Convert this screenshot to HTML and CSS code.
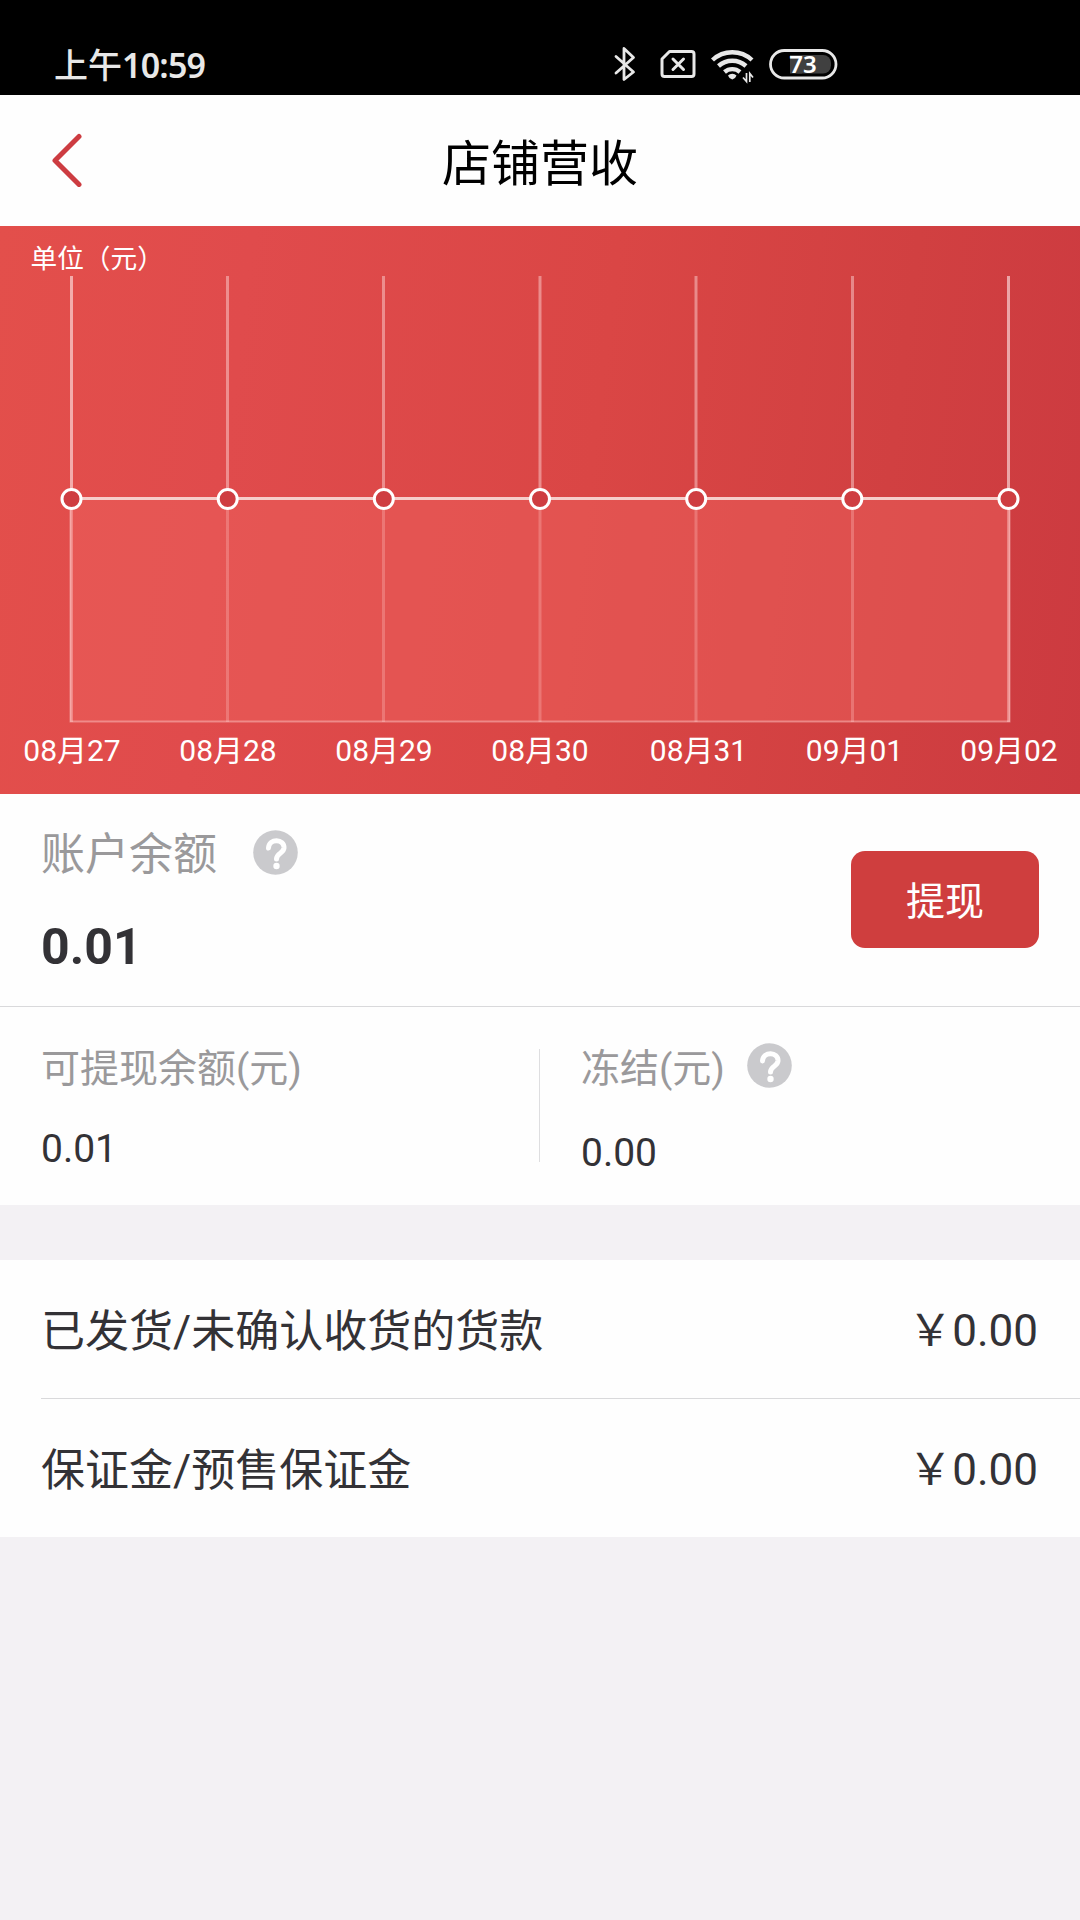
FILE: index.html
```html
<!DOCTYPE html>
<html lang="zh-CN">
<head>
<meta charset="utf-8">
<title>店铺营收</title>
<link rel="stylesheet" href="styles.css">
</head>
<body>
<div class="status-bar">
  <span class="status-time">上午<span class="status-digits">10:59</span></span>
  <svg class="status-icons" viewBox="610 40 232 48" width="232" height="48" fill="none" stroke="#e8e8e8">
    <path d="M616 56.5 633.5 72 624 79.500V48.500L633.5 57.500 616 73" stroke-width="2.8" stroke-linejoin="round" stroke-linecap="round"/>
    <path d="M669.500 51.500H691.500a2.500 2.500 0 0 1 2.500 2.500V74a2.500 2.500 0 0 1-2.500 2.500H664.500a2.500 2.500 0 0 1-2.500-2.500V59Z" stroke-width="3" stroke-linejoin="round"/>
    <path d="m673 59 10.500 10.500m0-10.500L673 69.500" stroke-width="3" stroke-linecap="round"/>
    <g stroke-width="4.400">
      <path d="M712.500 60a29 29 0 0 1 39.500 0"/>
      <path d="M718.500 66a20.500 20.500 0 0 1 27.500 0"/>
      <path d="M724.500 72a12 12 0 0 1 15.500 0"/>
    </g>
    <path d="M728 75.500a5.500 4.500 0 0 1 8.500 0l-1.500 2.500-2.700 1.500-2.800-1.500Z" fill="#e8e8e8" stroke="none"/>
    <path d="M746.500 73v8.500l-3.500-4M749.800 82v-8.500l3.200 4" stroke-width="1.700"/>
    <rect x="790" y="55" width="41" height="18.500" rx="8" fill="#404040" stroke="none"/>
    <rect x="790" y="55" width="12" height="18.500" fill="#404040" stroke="none"/>
    <rect x="770.500" y="50.500" width="65.500" height="27.500" rx="13.750" stroke-width="2.800"/>
    <text class="battery-text" x="803" y="72.500" text-anchor="middle">73</text>
  </svg>
</div>

<header class="header">
  <svg class="back" viewBox="0 0 32 54" width="32" height="54"><path d="M28 3.500 4 27.500 28 51.500" fill="none" stroke="#cd3c41" stroke-width="5" stroke-linecap="round" stroke-linejoin="round"/></svg>
  <h1 class="title">店铺营收</h1>
</header>

<section class="chart">
  <svg viewBox="0 0 1080 568" width="1080" height="568">
    <text class="unit" x="30.500" y="42">单位（元）</text>
    <g class="grid-lines">
      <path class="edge" d="M71.500 50V496"/>
      <path d="M227.500 50V496M383.500 50V496M540 50V496M696 50V496M852.500 50V496"/>
      <path class="edge" d="M1008.500 50V496"/>
    </g>
    <rect class="area" x="70" y="273" width="940" height="223"/>
    <path class="area-border" d="M70.500 273V495.500H1009.500V273"/>
    <path class="series" d="M71.500 272.500H1008.500"/>
    <g class="points">
      <circle cx="71.500" cy="273" r="9.500"/><circle cx="227.700" cy="273" r="9.500"/><circle cx="383.800" cy="273" r="9.500"/><circle cx="540" cy="273" r="9.500"/><circle cx="696.200" cy="273" r="9.500"/><circle cx="852.300" cy="273" r="9.500"/><circle cx="1008.500" cy="273" r="9.500"/>
    </g>
    <g class="dates">
      <text x="72" y="535">08月27</text><text x="228" y="535">08月28</text><text x="384" y="535">08月29</text><text x="540" y="535">08月30</text><text x="698.500" y="535">08月31</text><text x="854.500" y="535">09月01</text><text x="1009" y="535">09月02</text>
    </g>
  </svg>
</section>

<section class="balance">
  <div class="balance-info">
    <div class="label-row">
      <span class="label large">账户余额</span>
      <svg class="help" viewBox="0 0 45 45"><circle cx="22.500" cy="22.500" r="22.300"/><path d="M15.500 18C16 8 31.500 8.500 31 18 30.500 23.500 23.500 23 23.500 29"/><circle class="dot" cx="23.500" cy="36" r="3.200"/></svg>
    </div>
    <div class="total">0.01</div>
  </div>
  <button class="withdraw">提现</button>
</section>

<section class="details">
  <div class="detail">
    <span class="label">可提现余额(元)</span>
    <div class="amount">0.01</div>
  </div>
  <div class="detail frozen">
    <div class="label-row">
      <span class="label">冻结(元)</span>
      <svg class="help" viewBox="0 0 45 45"><circle cx="22.500" cy="22.500" r="22.300"/><path d="M15.500 18C16 8 31.500 8.500 31 18 30.500 23.500 23.500 23 23.500 29"/><circle class="dot" cx="23.500" cy="36" r="3.200"/></svg>
    </div>
    <div class="amount">0.00</div>
  </div>
</section>

<section class="list">
  <div class="row"><span class="name">已发货/未确认收货的货款</span><span class="value">￥0.00</span></div>
  <div class="row"><span class="name">保证金/预售保证金</span><span class="value">￥0.00</span></div>
</section>
</body>
</html>
```

FILE: styles.css
```css
* { box-sizing: border-box; }
body {
  margin: 0;
  width: 1080px;
  min-height: 1920px;
  background: #f3f1f4;
  color: #333236;
  font-family: Roboto, "Noto Sans CJK SC", sans-serif;
}
svg { display: block; }

.status-bar {
  height: 95px;
  padding: 0 238px 0 54px;
  display: flex;
  justify-content: space-between;
  background: #000;
  color: #e8e8e8;
}
.status-time {
  padding-top: 40px;
  font: 500 34px/48px "Noto Sans CJK SC", sans-serif;
}
.status-digits {
  font: 600 34px/48px "Noto Sans", sans-serif;
  letter-spacing: -0.8px;
}
.status-icons { margin-top: 40px; }
.battery-text {
  font: 600 24px "Noto Sans", sans-serif;
  fill: #fff;
  stroke: none;
}

.header {
  height: 131px;
  padding: 0 51px 2px;
  display: grid;
  grid-template-columns: 32px 1fr 32px;
  align-items: center;
  background: #fefefe;
}
.title {
  margin: 0;
  padding-top: 10px;
  font-size: 49px;
  font-weight: 400;
  line-height: 60px;
  text-align: center;
  color: #000;
}

.chart {
  height: 568px;
  background: linear-gradient(97deg, #e34f4b 0%, #e04b4c 22%, #da4645 54%, #d14041 80%, #cc3a40 100%);
}
.chart text { fill: #fff; }
.unit { font-size: 26.700px; }
.dates { font-size: 30px; text-anchor: middle; }
.grid-lines path { stroke: rgba(255, 225, 225, .45); stroke-width: 3; }
.grid-lines .edge { stroke: rgba(255, 235, 235, .6); }
.area { fill: rgba(235, 96, 92, .5); }
.area-border { fill: none; stroke: rgba(255, 220, 220, .4); stroke-width: 2px; }
.series { stroke: #f6cdca; stroke-width: 3; }
.points circle { fill: #cf3d41; stroke: #fff; stroke-width: 3; }

.balance {
  height: 213px;
  padding: 27px 41px 0;
  display: flex;
  justify-content: space-between;
  background: #fefefe;
  border-bottom: 1px solid #d9d9db;
}
.label-row { display: flex; align-items: flex-start; }
.label {
  display: block;
  font-size: 39px;
  line-height: 60px;
  color: #9a999b;
}
.label.large {
  width: 212px;
  padding-top: 2px;
  font-size: 44px;
  line-height: 64px;
}
.help { width: 45px; height: 45px; margin-top: 9px; fill: #cacacd; }
.help path { fill: none; stroke: #fff; stroke-width: 5; stroke-linecap: round; }
.help .dot { fill: #fff; }
.total {
  margin-top: 30px;
  font-size: 50px;
  font-weight: 700;
  line-height: 60px;
}
.withdraw {
  width: 188px;
  height: 97px;
  margin-top: 30px;
  padding: 5px 0 0;
  border: 0;
  border-radius: 14px;
  background: #cf3e3e;
  color: #fff;
  font: 39px/48px Roboto, "Noto Sans CJK SC", sans-serif;
}

.details {
  height: 198px;
  display: grid;
  grid-template-columns: 1fr 1fr;
  background: linear-gradient(#dedee0, #dedee0) 539px 42px / 1px 113px no-repeat #fefefe;
}
.detail { padding: 32px 41px 0; }
.amount { margin-top: 20px; font-size: 39px; line-height: 60px; }
.frozen .label { width: 166px; }
.frozen .help { margin-top: 4px; }
.frozen .amount { margin-top: 24px; }

.list { margin-top: 55px; background: #fefefe; }
.row {
  height: 139px;
  margin-left: 41px;
  padding: 4px 42px 0 0;
  display: flex;
  align-items: center;
  justify-content: space-between;
  font-size: 44px;
  line-height: 60px;
}
.row:first-child { border-bottom: 1px solid #d9d9db; }
.row:last-child { height: 138px; }
.name { padding-top: 1px; }
```
